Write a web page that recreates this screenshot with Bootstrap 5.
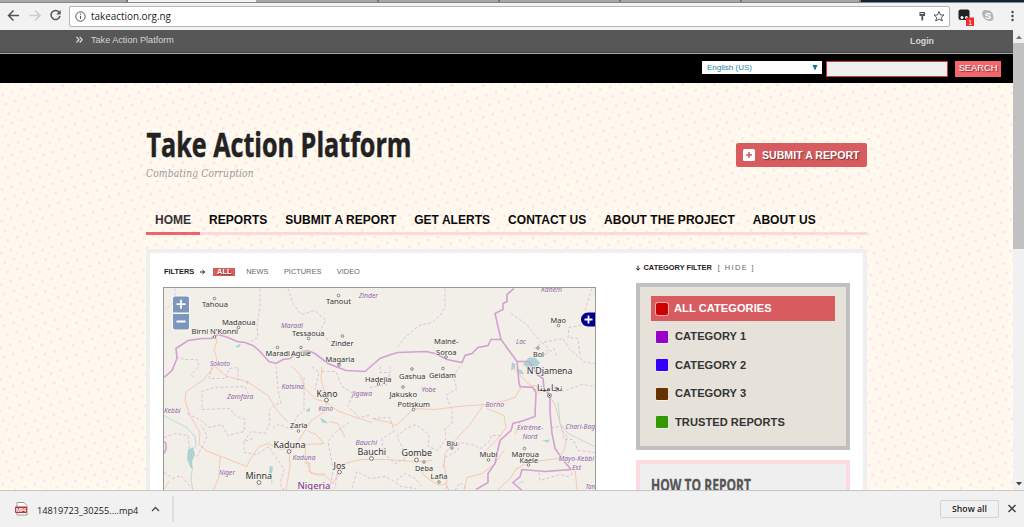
<!DOCTYPE html>
<html lang="en">
<head>
<meta charset="utf-8">
<meta name="viewport" content="width=device-width, initial-scale=1">
<title>Take Action Platform</title>
<link href="https://cdn.jsdelivr.net/npm/bootstrap@5.3.0/dist/css/bootstrap.min.css" rel="stylesheet">
<style>
  body{height:527px;font-family:"Liberation Sans",Arial,sans-serif;font-size:12px;line-height:1;background:#f2f2f2;color:#222}
  svg{display:block;flex:none}
  .tabstrip{height:3px;background:#a4a8a8;border-bottom:1px solid #888}
  .tabstrip .cell{border-right:2px solid #777}
  .toolbar{height:27px;padding-bottom:1px}
  .omnibox{height:21px;width:881px;margin-left:7px;border:1px solid #b5b5b5;border-radius:2px;background:#fff;font:9.9px "Open Sans",sans-serif}
  .viewport-row{height:460px}
  .page-area{width:1013px;background:#fff9f0}
  .dots{left:0;top:0;z-index:0}
  .layer{z-index:1}
  .crumbbar{height:24px;background:#575757;border-bottom:1px solid #aaa;box-shadow:inset 0 -1px #444;color:#d5d5d5;font-size:9.1px}
  .searchbar{height:29px;background:#000;padding:7px 12px 0 0}
  .lang{width:120px;height:13px;background:#fff;color:#2785a6;font-size:8px;padding:0 4px 0 5px;margin-right:4px}
  .query{width:122px;height:16px;background:#efefef;border:1px solid #c9383f;margin-right:7px}
  .go{width:46px;height:16px;background:#f2666c;color:#fff;font-size:9.3px;text-shadow:1px 1px 1px #70303a}
  .wrap{width:721px;margin-left:146px}
  .masthead{height:120px;padding-top:41px}
  .masthead svg{overflow:visible}
  .tagline{font:italic 10.2px "DejaVu Serif Condensed","DejaVu Serif",serif;color:#999;margin-top:3px;letter-spacing:.14px}
  .submit{width:131px;height:24px;margin-top:19px;border-radius:2px;background:#d75b5f;color:#fff;font-size:10.6px;font-weight:700;text-shadow:1px 1px 1px #733;padding-left:7px;gap:7px;white-space:nowrap}
  .mainnav{height:32px;border-bottom:3px solid #fcd9dc;font-size:12px;font-weight:700;color:#0a0a0a;margin-bottom:14px}
  .mainnav span{padding:11px 8.900px 0 9px;height:32px;letter-spacing:.04px}
  .mainnav .here{border-bottom:3px solid #f0656b;color:#333}
  .panel{height:300px;border:4px solid #efefef;background:#fff;padding:0 13px 0 13px}
  .filters{height:34px;font-size:7.4px;color:#666;padding-top:3px;padding-left:1px}
  .filters b{color:#222}
  .filters .all{background:#d75b5f;color:#fff;width:22px;height:8px;text-shadow:1px 1px 1px #733;margin-left:7px}
  .mapbox{width:433px;height:220px;border:1px solid #999}
  .side{width:214px}
  .cathead{height:30px;font-size:7.4px;color:#222}
  .cats{height:167px;border:4px solid #c0c0c0;background:#e6e2da;padding:9px 11px;font-size:11.1px;font-weight:700;color:#333;letter-spacing:.05px}
  .cats .line{height:25px;margin-bottom:3.4px;padding-left:5px;gap:7px}
  .cats .on{background:#d75b5f;color:#fff;gap:6px}
  .sw{width:12px;height:12px;border-radius:1px;box-shadow:0 1px 1px #f6f3f3}
  .on .sw{border-radius:2px;box-shadow:0 0 0 1px #eba9aa}
  .how{height:80px;margin-top:10px;border:4px solid #fcdadd;background:#efefef;padding:12px 11px}
  .scroller{width:11px;background:#f1f1f1}
  .thumb{height:206px;background:#c1c1c1}
  .shelf{height:37px;border-top:1px solid #c6c6c6;background:#f1f1f1;font-family:"Open Sans",sans-serif}
  .showall{width:59px;height:18px;border:1px solid #d3d3d3;border-radius:2px;font-size:8.7px;font-weight:600;color:#222}
</style>
</head>
<body class="overflow-hidden d-flex flex-column">
<div class="tabstrip d-flex"><div class="cell" style="width:128px"></div><div style="width:128px;background:#f2f2f2"></div><div class="cell" style="width:123px"></div><div class="cell" style="width:121px"></div><div class="cell" style="width:121px"></div><div class="cell" style="width:121px"></div><div class="cell" style="width:119px"></div><div class="flex-fill" style="background:#172234"></div></div>
<div class="toolbar d-flex align-items-center">
  <svg width="62" height="26" viewBox="0 0 62 26" fill="none" stroke="#555" stroke-width="1.5"><path d="M19 12.500H9M13.500 7.500L8.500 12.500L13.500 17.500"/><path stroke="#ccc" d="M29.500 12.500H39.500M35 7.500L40 12.500L35 17.500"/><path d="M59.300 9.500A4.500 4.500 0 1 0 60 13"/><path d="M60.700 7V11.400H56.300Z" fill="#555" stroke="none"/></svg>
  <div class="omnibox d-flex align-items-center">
    <svg width="21" height="19" viewBox="0 0 21 19" fill="none" stroke="#555"><circle cx="10.500" cy="9.500" r="4.700"/><path d="M10.500 8.800V12M10.500 6.500V7.700"/></svg>
    <span style="margin-top:-1px">takeaction.org.ng</span>
    <svg class="ms-auto" width="35" height="19" viewBox="0 0 35 19"><path d="M5.500 5H11V9H9.200V13.500H7.400V9H5.500Z" fill="#555"/><path d="M6.500 6.500H9.500" stroke="#eee"/><path d="M25 4.500L26.500 8H30L27.300 10.400L28.300 14L25 12L21.700 14L22.700 10.400L20 8H23.500Z" fill="none" stroke="#555"/></svg>
  </div>
  <svg width="74" height="26" viewBox="950 3 74 26"><rect x="958.500" y="9.500" width="11" height="10.500" rx="2" fill="#222"/><circle cx="962" cy="17.500" r="1.500" fill="#fff"/><circle cx="966.500" cy="17.500" r="1.500" fill="#fff"/><rect x="966" y="17.500" width="8" height="8.500" fill="#ef2a2a"/><text x="968.200" y="24.500" font-size="7" fill="#fff">1</text><circle cx="985.500" cy="13.500" r="3.500" fill="#b5b5b5"/><circle cx="990" cy="17.500" r="3.500" fill="#b5b5b5"/><circle cx="988" cy="15.500" r="5" fill="#b5b5b5"/><text x="984.800" y="19" font-size="9.500" font-weight="700" fill="#fff">S</text><g fill="#444"><circle cx="1012.500" cy="12" r="1.200"/><circle cx="1012.500" cy="16" r="1.200"/><circle cx="1012.500" cy="20" r="1.200"/></g></svg>
</div>

<div class="viewport-row d-flex overflow-hidden">
  <main class="page-area position-relative overflow-hidden">
    <svg class="dots position-absolute" width="1013" height="460"><defs><pattern id="spots" width="10" height="10" patternUnits="userSpaceOnUse" patternTransform="rotate(-18)"><circle cx="2.500" cy="2.500" r="1.400" fill="#fde2e7"/><circle cx="7.500" cy="7.500" r="1.300" fill="#fdf5d5"/></pattern></defs><rect width="1013" height="460" fill="url(#spots)"/></svg>
    <div class="layer position-relative">
      <div class="crumbbar d-flex align-items-center"><svg width="91" height="20" viewBox="0 0 91 20" fill="none" stroke="#ddd" stroke-width="1.200"><path d="M76.500 5L79 7.700L76.500 10.500M79.700 5L82.200 7.700L79.700 10.500"/></svg><span style="margin-top:-2px">Take Action Platform</span><b class="ms-auto" style="margin-right:79px;font-size:8.8px">Login</b></div>
      <div class="searchbar d-flex justify-content-end">
        <div class="lang d-flex align-items-center justify-content-between"><span>English (US)</span><svg width="6" height="6"><path d="M.5 0H5.500L3 5.500Z" fill="#127293"/></svg></div>
        <div class="query"></div><div class="go d-flex align-items-center justify-content-center">SEARCH</div>
      </div>
      <div class="wrap">
        <header class="masthead d-flex justify-content-between">
          <div><svg width="270" height="41"><text x="0.500" y="33" textLength="265" lengthAdjust="spacingAndGlyphs" font-family="Open Sans" font-weight="700" font-size="34.500" fill="#222" stroke="#222" stroke-width=".5">Take Action Platform</text></svg><div class="tagline">Combating Corruption</div></div>
          <div class="submit d-flex align-items-center"><svg width="12" height="12"><rect width="12" height="12" rx="1.500" fill="#fff"/><path d="M6 3V9M3 6H9" stroke="#d75b5f" stroke-width="1.500"/></svg>SUBMIT A REPORT</div>
        </header>
        <nav class="mainnav d-flex text-nowrap"><span class="here">HOME</span><span>REPORTS</span><span>SUBMIT A REPORT</span><span>GET ALERTS</span><span>CONTACT US</span><span>ABOUT THE PROJECT</span><span>ABOUT US</span></nav>
        <section class="panel d-flex justify-content-between">
          <div>
            <div class="filters d-flex align-items-center"><b>FILTERS</b><svg width="6" height="6" viewBox="0 0 6 6" style="margin-left:6px"><path d="M0 3H4.500M2.500 1L4.800 3L2.500 5" fill="none" stroke="#222"/></svg><b class="all d-flex align-items-center justify-content-center">ALL</b><span style="margin-left:11px">NEWS</span><span style="margin-left:15.5px">PICTURES</span><span style="margin-left:15.5px">VIDEO</span></div>
            <div class="mapbox overflow-hidden">
<svg width="431" height="218" viewBox="164 287.500 431 218" font-family="Noto Sans">
  <rect x="164" y="287" width="431" height="220" fill="#f2efe9"/>
  <g fill="#aad3d3">
    <path d="M525 361L529 357L535 357L540 362L537 366L527 367L523 364Z"/><path d="M512 362l3 1v5l-4 2z"/><path d="M516 368l6 2 2 4-5-1z"/>
    <path d="M188 449L193 447L195 454L192 461L193 470L190 466L187 458Z"/><path d="M270 465l3 2-1 6-3-1z"/><path d="M235 346l6-3-2 4z"/><path d="M307 409l3-2v4h-4z"/><path d="M320 417l5 3 3 3-6-1z"/><path d="M246 382l3-2-2 4z"/><path d="M542 440l8-1-2 3z"/>
  </g>
  <g fill="none" stroke="#f8c7b3" stroke-width="1">
    <path d="M215 335L217 341L214 349L217 359L212 369L203 380L186 391L185 400L190 415L200 432L199 444L206 450L221 456L247 466L250 459L259 446L268 443L281 449L295 446L303 433L311 420L325 411L327 400L321 379L322 366"/>
    <path d="M215 366L227 376L247 381L262 391L268 395L277 410L288 422M327 402L337 410L353 416L372 422M307 430L316 434L324 443L305 444L289 450L290 465L286 490M291 443L305 445L306 459L311 473L325 475L333 483L339 472L345 463L361 459L386 459L416 461L432 460"/>
    <path d="M220 456L219 477L213 490M292 366L300 374L305 388L316 399L326 401M372 418L389 422L396 425L407 415L413 408L435 409L458 406L485 404L506 400L515 397L521 387L535 385L543 391M483 405L470 424L453 442L445 453L444 465L447 479L446 490M487 408L504 415L506 427L498 438L486 450M417 465L424 475L439 485L446 483L449 490M549 395L555 404L562 430L567 436L564 450L558 458L527 462L516 469M464 490L467 477L482 473L494 464L504 450M512 366L526 381L540 393M575 467L577 490"/>
    <path d="M304 462l6 1-1 8 8 3 8-1M520 422l-5 12M517 467l-7 11-13 12M164 489l5-8M345 437l-7-14-9-2"/>
  </g>
  <g fill="none" stroke="#dfbfdf" stroke-width="1" stroke-dasharray="3 2">
    <path d="M175 288V301L165 309M260 288V307L257 325L258 337L251 341M288 288L293 303L301 314L315 310L326 320L320 330L330 342M445 288V307L440 315L432 322L419 325L405 337L397 347M511 313L527 324L535 335L542 342L563 338L569 348L585 362L595 363M592 288L585 310L584 324L569 327L568 337L578 338L580 355"/>
    <path d="M176 356L184 359L197 359L199 366L192 373M212 366L209 378L226 378L229 368L238 367V380M202 394L202 409L230 408L236 416L245 419L244 431L228 435L222 424L209 427L200 419L187 413M201 391L215 387L245 386L249 395M253 438L244 441V452L257 454L269 446L284 469L280 483L284 490M244 441L251 431L265 433L270 422L269 410L275 404L281 403L278 389L276 366M304 377V410L296 417L292 429L279 424L273 427"/>
    <path d="M312 366L319 372L315 389M322 371L336 371L342 386L353 393L348 406L359 417L369 415M349 422L335 432L328 441L331 457L333 469L330 489M164 437L176 433L188 435L190 453L197 456L203 445L207 435L201 424M164 472L173 478L181 475L192 488M370 387L387 384L390 372M373 418L390 417L394 431L382 438L383 452L395 463L405 458L402 446L397 436L406 428L416 424L429 434L428 446L438 450L446 438L445 428L452 423V410L446 395L457 388L453 376L460 366"/>
    <path d="M534 348l8-6 7 6-7 9 5-4 7-5 3 9M352 488L357 471L370 478L386 476L401 486L416 488M443 467L445 457L458 450L459 442L472 444L481 448L490 440L491 435L503 435M556 391L566 390L582 384L595 386M551 427L562 426L564 439L573 439L578 450L595 452M539 472L540 480L560 474L568 476L575 471M380 366v6h10v-6M338 467l-3 21M396 480l9-7 10 5 8 10M455 490l5-8 6 5"/>
  </g>
  <g fill="none" stroke="#d49fd3" stroke-width="1.600">
    <path d="M164 377L172 370L177 358L176 348L188 340L202 338L211 338L218 334L228 337L237 341L245 342L253 345L259 350L269 361L276 363L283 359L290 358L297 352L308 350L315 353L328 363L346 370L365 371L373 364L380 358L391 354L398 352L426 351L435 353L447 359L462 362L465 355L472 353L478 347L488 345L491 339L501 339L495 313L503 309V303L507 301L507 294L514 288M501 339L517 361L519 382L520 386L533 387L536 392L535 416L524 420L513 423L511 430L500 440L497 453L495 463L488 473V482L476 489"/>
    <path d="M517 361H529L533 366L537 374L543 378L544 388L550 395L550 411L552 433L555 448L562 458L571 469L545 471L522 469L520 476L513 482L522 490M164 453L166 449V443L164 441"/>
  </g>
  <g fill="none" stroke="#b5d8d9" stroke-width=".9"><path d="M164 415L175 421L187 427L195 436L196 445L192 450M192 470L191 480L193 490M558 402L560 423L568 433L580 439L595 446M271 473l1 10M518 483l6-2M190 373l4 4"/></g>
  <g id="places"></g>
  <g><rect x="172" y="295" width="18" height="35" rx="3" fill="#fff" opacity=".6"/><path d="M175 296H187A2 2 0 0 1 189 298V312H173V298A2 2 0 0 1 175 296ZM173 313.500H189V327A2 2 0 0 1 187 329H175A2 2 0 0 1 173 327Z" fill="#7c96bd"/><path d="M176.500 303.700H185.500M181 299.200V308.200M176.500 321H185.500" stroke="#fff" stroke-width="1.800"/></g>
  <path d="M595 312H588A7 7 0 0 0 588 326H595Z" fill="#00008b"/><path d="M584.500 319H592.500M588.500 315V323" stroke="#fff" stroke-width="1.800"/>
</svg></div>
          </div>
          <aside class="side">
            <div class="cathead d-flex align-items-center"><svg width="7.5" height="7" viewBox="0 0 7.5 7"><path d="M2 .5V5M0 3.200L2 5.200L4 3.200" fill="none" stroke="#222"/></svg><b>CATEGORY FILTER</b><span style="margin-left:6px;letter-spacing:1.400px;color:#666">[ HIDE ]</span></div>
            <div class="cats">
              <div class="line on d-flex align-items-center"><i class="sw" style="background:#c00"></i>ALL CATEGORIES</div>
              <div class="line d-flex align-items-center"><i class="sw" style="background:#90c"></i>CATEGORY 1</div>
              <div class="line d-flex align-items-center"><i class="sw" style="background:#30f"></i>CATEGORY 2</div>
              <div class="line d-flex align-items-center"><i class="sw" style="background:#630"></i>CATEGORY 3</div>
              <div class="line d-flex align-items-center"><i class="sw" style="background:#390"></i>TRUSTED REPORTS</div>
            </div>
            <div class="how"><svg width="110" height="22"><text x="0" y="15" textLength="100" lengthAdjust="spacingAndGlyphs" font-family="Open Sans" font-weight="700" font-size="15.500" fill="#555" stroke="#555" stroke-width=".3">HOW TO REPORT</text></svg></div>
          </aside>
        </section>
      </div>
    </div>
  </main>
  <div class="scroller"><svg width="11" height="13"><path d="M3 9H9L6 5.500Z" fill="#777"/></svg><div class="thumb"></div><svg width="11" height="241"><path d="M3 233H9L6 236.500Z" fill="#444"/></svg></div>
</div>

<footer class="shelf d-flex align-items-center">
  <svg width="37" height="36" viewBox="0 491 37 36"><path d="M17 502.500H24L27 505.500V515H17Z" fill="#fff" stroke="#999"/><rect x="15" y="506.500" width="12" height="6.500" rx="1" fill="#b8343b"/><text x="15.700" y="512" font-size="5.500" font-weight="700" fill="#fff" textLength="10.500">MP4</text></svg>
  <span class="text-nowrap" style="width:101px;font-size:9.2px;margin-top:3px">14819723_30255....mp4</span>
  <svg width="36" height="36" viewBox="138 491 36 36"><path d="M152 511L155.500 507.500L159 511" fill="none" stroke="#444" stroke-width="1.300"/><path d="M173 496V522" stroke="#ccc"/></svg>
  <div class="showall ms-auto d-flex align-items-center justify-content-center">Show all</div>
  <svg width="25" height="36" viewBox="999 491 25 36"><path d="M1008.500 505L1015.500 512M1015.500 505L1008.500 512" stroke="#444" stroke-width="1.500"/></svg>
</footer>
<script src="https://cdn.jsdelivr.net/npm/bootstrap@5.3.0/dist/js/bootstrap.bundle.min.js"></script>
<script>
// Place labels: name, left, right, baseline, font size; regions are drawn in purple italics.
const towns=[["Tahoua",202,228,306.3,7.5],["Tanout",326,351,303,7.5],["Madaoua",222,255.5,324,7.5],["Birni N'Konni",191.5,238,333.5,7.5],["Tessaoua",292,324.5,335,7.5],["Zinder",331,353.5,345,7.5],["Maradi",265.5,290,355.5,7.5],["Aguié",291,311,355.5,7.5],["Magaria",325.5,354.5,361.5,7.5],["Mainé-",434,458.5,343.5,7.5],["Soroa",436,456.5,354,7.5],["Mao",550.5,566,322,7.5],["Bol",533,544,356.5,7.5],["N'Djamena",526.7,572.5,373.5,9],["نجامينا",537,562.5,390.5,9],["Kano",316.5,337.5,396,9],["Zaria",290,307.5,427.5,7.8],["Kaduna",273.5,305.5,447,9],["Minna",245.5,272,478.5,9],["Jos",333.5,345.5,468,9],["Bauchi",357.5,386,454,9],["Hadejia",365,391.5,381,7.5],["Gashua",399,425.5,378,7.5],["Geidam",429,456,377,7.5],["Jakusko",389.5,417,396.5,7.5],["Potiskum",397.5,430,406.5,7.5],["Biu",446.5,457.5,445,7.5],["Gombe",401.5,432,455.5,9],["Deba",415,433,470.5,7.5],["Lafia",430.5,447.5,478,7.5],["Mubi",479.5,497.5,456.5,7.5],["Maroua",511.5,539,456,7.5],["Kaele",519.5,538,462,7.5]];
const regions=[["Zinder",358.7,378,297,6.5],["Maradi",281,303,327.5,6.5],["Sokoto",210,230,365,6.5],["Kanem",541,562,291,6.5],["Lac",516,526,343.5,6.5],["Katsina",281.5,304,388,6.5],["Jigawa",352,372,395,6.5],["Zamfara",227,253.5,398.5,6.5],["Kebbi",164,180.5,412,6.5],["Kano",318.5,333,410.5,6.5],["Kaduna",292.5,315.5,459,6.5],["Niger",219,235,474.5,6.5],["Bauchi",355.5,377,444.5,6.5],["Yobe",421.5,436,391.5,6.5],["Borno",485.5,504,406,6.5],["Extrême-",517,543,429.5,6.5],["Nord",522.5,537.5,438.5,6.5],["Chari-Bag",565.5,595,428.5,6.5],["Mayo-Kebbi",558.5,594,460.5,6.5],["Est",572,581,469.5,6.5],["Tan",585.5,595,488,6.5]];
const marks=[[214.5,298],[338.500,295],[238.500,327],[214.500,336.500],[308.500,338],[342.500,335.500],[277.500,347],[301,347],[339,364.500],[446,356.500],[558.500,325],[538,347.500],[298.500,430.500],[378.500,383.500],[412,368.500],[443,368],[403,386.500],[413.500,409],[452,447.500],[424,461.500],[439,481.500],[488.500,459.500],[524.500,448],[528.500,464.500]];
const big=[[326.500,399.500],[289,451],[259,482],[339.500,471.500],[371.500,458],[416.500,459.500],[549.500,395]];
const g=document.getElementById('places');
const label=(t,fill,extra)=>`<text x="${t[1]}" y="${t[3]}" font-size="${t[4]}" textLength="${t[2]-t[1]}" lengthAdjust="spacingAndGlyphs" fill="${fill}" stroke="#f6f3ee" stroke-width="1.2" paint-order="stroke" ${extra}>${t[0]}</text>`;
g.innerHTML=regions.map(t=>label(t,'#8f629f','font-style="italic"')).join('')
 +towns.map(t=>label(t,'#333','')).join('')
 +marks.map(m=>`<circle cx="${m[0]}" cy="${m[1]}" r="1.3" fill="#fff" stroke="#555" stroke-width=".7"/>`).join('')
 +big.map(m=>`<circle cx="${m[0]}" cy="${m[1]}" r="1.900" fill="#fff" stroke="#555" stroke-width=".8"/>`).join('')
 +'<circle cx="549.500" cy="395" r=".8" fill="#333"/>'
 +label(["Nigeria",297.5,330.5,488.5,9],'#85478f','font-weight="500"');
</script>
</body>
</html>
